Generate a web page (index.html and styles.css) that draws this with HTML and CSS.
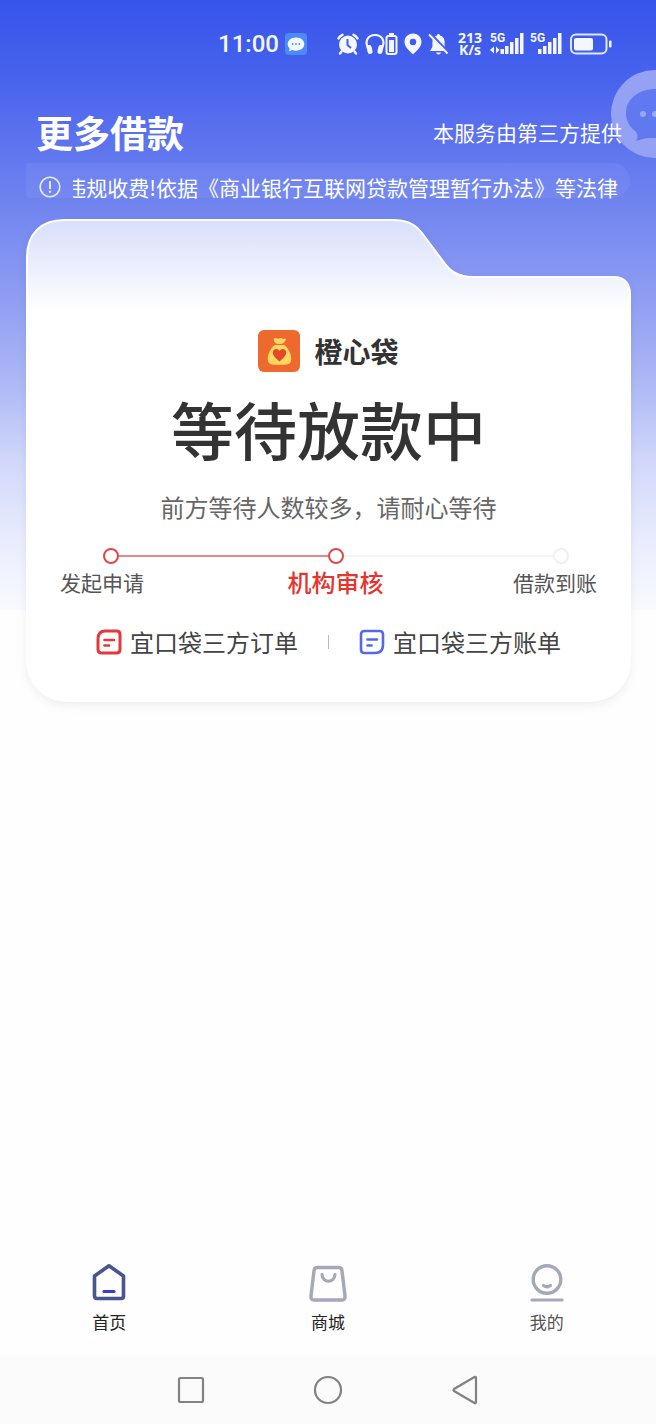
FILE: index.html
```html
<!DOCTYPE html>
<html lang="zh-CN">
<head>
<meta charset="utf-8">
<meta name="viewport" content="width=device-width, initial-scale=1">
<title>更多借款</title>
<link rel="stylesheet" href="styles.css">
</head>
<body>
<div class="app">
  <div class="status">
    <span class="clock">11:00</span>
    <svg class="status-chat" width="22" height="22" viewBox="0 0 22 22" aria-hidden="true"><rect width="22" height="22" rx="4" fill="#4c8af5"/><path d="M11 4.500c5 0 8.300 2.900 8.300 6.600s-3.300 6.600-8.300 6.600c-1.300 0-2.600-.2-3.700-.7L4 18.200l.7-2.700C3.400 14.300 2.700 12.800 2.700 11.100c0-3.700 3.300-6.600 8.300-6.600z" fill="#f4f8ff"/><g fill="#4c8af5"><circle cx="7.700" cy="11" r=".9"/><circle cx="11" cy="11" r=".9"/><circle cx="14.300" cy="11" r=".9"/></g></svg>
    <svg class="status-alarm" width="22" height="22" viewBox="0 0 22 22" aria-hidden="true"><g fill="none" stroke="#f4f7ff" stroke-width="2.400" stroke-linecap="round"><path d="M1.500 5.500Q2.500 3 5.500 1.800M20.500 5.500Q19.500 3 16.500 1.800M4.500 18.500L3 20.500M17.500 18.500L19 20.500"/></g><circle cx="11" cy="11.500" r="9" fill="#f4f7ff"/><path d="M10.500 6v6l3.500 3" fill="none" stroke="#4560ec" stroke-width="2"/></svg>
    <svg class="status-head" width="20" height="22" viewBox="0 0 20 22" aria-hidden="true"><path d="M3 15C-1 7 4 2 10 2s11 5 7 13" fill="none" stroke="#f4f7ff" stroke-width="2.200"/><rect x="2" y="12" width="5" height="9" rx="2.400" fill="#f4f7ff" transform="rotate(-12 4.500 16)"/><rect x="13" y="12" width="5" height="9" rx="2.400" fill="#f4f7ff" transform="rotate(12 15.500 16)"/></svg>
    <svg width="13" height="22" viewBox="0 0 13 22" aria-hidden="true"><rect x="4" y="0" width="5" height="2" fill="#f4f7ff"/><rect x="1.500" y="3" width="10" height="18" rx="2" fill="none" stroke="#f4f7ff" stroke-width="2"/><rect x="4" y="7" width="5" height="12" fill="#f4f7ff"/></svg>
    <svg class="status-pin" width="18" height="22" viewBox="0 0 18 22" aria-hidden="true"><path fill-rule="evenodd" d="M9 .5c5 0 8.500 3.700 8.500 8.300C17.500 14 12.500 18 9 21.500 5.500 18 .5 14 .5 8.800.5 4.200 4 .5 9 .5zm0 5.300a3.200 3.200 0 1 0 0 6.400 3.200 3.200 0 0 0 0-6.400z" fill="#f4f7ff"/></svg>
    <svg class="status-bell" width="21" height="22" viewBox="0 0 21 22" aria-hidden="true"><path d="M10.500 1c1 0 1.500.6 1.500 1.600 3 .8 4.600 3 4.600 6V14l2.400 4H2l2.400-4V8.600c0-3 1.600-5.200 4.600-6C9 1.600 9.500 1 10.500 1zM8 19.500h5q-.6 2-2.500 2T8 19.500z" fill="#f4f7ff"/><path d="M2.500.5l18 19" stroke="#4560ec" stroke-width="2.500"/><path d="M1 1.500l18.500 19" stroke="#f4f7ff" stroke-width="1.800"/></svg>
    <span class="speed">213<br>K/s</span>
    <svg class="status-signal" width="34" height="24" viewBox="0 0 34 24" aria-hidden="true"><text x="0" y="10" class="net">5G</text><g fill="#f4f7ff"><path d="M0 18l4-3.500v7zM9.500 18L6 14.500v7z"/><rect x="10.500" y="17" width="3.500" height="5"/><rect x="15" y="14" width="3.500" height="8"/><rect x="20" y="10" width="3.500" height="12"/><rect x="25" y="6" width="3.500" height="16"/><rect x="30" y="1" width="3.500" height="21"/></g></svg>
    <svg class="status-signal2" width="32" height="24" viewBox="0 0 32 24" aria-hidden="true"><text x="0" y="10" class="net">5G</text><g fill="#f4f7ff"><rect x="8" y="17" width="3.500" height="5"/><rect x="13" y="14" width="3.500" height="8"/><rect x="18" y="10" width="3.500" height="12"/><rect x="23" y="6" width="3.500" height="16"/><rect x="28" y="1" width="3.500" height="21"/></g></svg>
    <svg class="status-batt" width="42" height="22" viewBox="0 0 42 22" aria-hidden="true"><rect x="1" y="1.500" width="35.500" height="19" rx="5" fill="none" stroke="#dfe6ff" stroke-width="2"/><rect x="4" y="5" width="19" height="12.500" rx="2" fill="#f4f7ff"/><rect x="39" y="7.500" width="2.500" height="7" rx="1" fill="#f4f7ff"/></svg>
  </div>

  <header class="header">
    <h1 class="title">更多借款</h1>
    <p class="provider">本服务由第三方提供</p>
  </header>

  <div class="notice">
    <svg width="22" height="22" viewBox="0 0 22 22" aria-hidden="true"><circle cx="11" cy="11" r="9.800" fill="none" stroke="#e6eafe" stroke-width="1.600"/><path d="M11 5v8" stroke="#e6eafe" stroke-width="2"/><circle cx="11" cy="15.700" r="1.200" fill="#e6eafe"/></svg>
    <div class="marquee"><span class="marquee-text">违规收费!依据《商业银行互联网贷款管理暂行办法》等法律</span></div>
  </div>

  <main class="card">
    <svg class="card-shape" viewBox="0 0 604 483" preserveAspectRatio="none" aria-hidden="true">
      <defs><linearGradient id="sheet" x1="0" y1="0" x2="0" y2="1"><stop offset="0" stop-color="#d9dffb"/><stop offset=".1" stop-color="#eceffd"/><stop offset=".19" stop-color="#fff"/></linearGradient></defs>
      <path d="M1 38C1 15 15 1 38 1H366C379 1 388 4 396 15L417 43C424 53 432 58 446 58H587C597 58 603 64 603 75V440C603 465 586 482 561 482H43C18 482 1 465 1 440Z" fill="url(#sheet)" stroke="#fff" stroke-width="2"/>
    </svg>
    <div class="brand">
      <svg width="42" height="42" viewBox="0 0 42 42" aria-hidden="true"><rect width="42" height="42" rx="6" fill="#ee692d"/><path d="M15.500 8.500Q18 7.500 20 9q3-2 5 0 1.600-.8 3-.3-.8 4-4.500 5.300h-4.500Q16 12.500 15.500 8.500z" fill="#fcd569"/><path d="M16.500 15h10c4 3.500 6.700 9 6.700 14 0 4-2.500 5.700-6 5.700H15.700c-3.500 0-6-1.700-6-5.700 0-5 2.800-10.500 6.800-14z" fill="#fcd85f"/><path d="M21.500 31.500C17.500 28 14.800 25.800 14.800 22.600c0-4 5-5 6.700-1.500 1.700-3.500 6.700-2.500 6.700 1.500 0 3.200-2.700 5.400-6.700 8.900z" fill="#e4482b"/></svg>
      <span class="brand-name">橙心袋</span>
    </div>
    <h2 class="state">等待放款中</h2>
    <p class="hint">前方等待人数较多，请耐心等待</p>
    <div class="track" aria-hidden="true">
      <span class="dot on"></span><span class="bar on"></span><span class="dot on"></span><span class="bar"></span><span class="dot"></span>
    </div>
    <ol class="steps">
      <li class="step">发起申请</li>
      <li class="step current" aria-current="step">机构审核</li>
      <li class="step">借款到账</li>
    </ol>
    <div class="links">
      <a class="link" href="#orders"><svg width="26" height="26" viewBox="0 0 26 26" fill="none" stroke="#e6383b" stroke-linecap="round" aria-hidden="true"><path d="M9 2H20.500Q24 2 24 5.500V20.500Q24 24 20.500 24H5.500Q2 24 2 20.500V10Q2 2 9 2z" stroke-width="3"/><path d="M8.500 11H18M8.500 16.500H13" stroke-width="2.600"/></svg>宜口袋三方订单</a>
      <span class="divider"></span>
      <a class="link" href="#bills"><svg width="26" height="26" viewBox="0 0 26 26" fill="none" stroke="#5767ec" stroke-linecap="round" aria-hidden="true"><path d="M5.500 2H20.500Q24 2 24 5.500V16Q24 24 16 24H5.500Q2 24 2 20.500V5.500Q2 2 5.500 2z" stroke-width="2.600"/><path d="M8.500 10.500H18M8.500 16.500H12.500" stroke-width="2.600"/></svg>宜口袋三方账单</a>
    </div>
  </main>

  <nav class="tabs">
    <a class="tab" href="#home"><svg width="40" height="40" viewBox="0 0 40 40" fill="none" stroke-linecap="round" stroke-linejoin="round" aria-hidden="true"><path d="M20 3.800L34.500 14V34Q34.500 36.500 32 36.500H8Q5.500 36.500 5.500 34V14z" stroke="#48558e" stroke-width="3.600"/><path d="M15 29.500H25" stroke="#343fd0" stroke-width="3.200"/></svg>首页</a>
    <a class="tab" href="#mall"><svg width="40" height="40" viewBox="0 0 40 40" fill="none" stroke="#a5a7bb" stroke-linecap="round" stroke-linejoin="round" aria-hidden="true"><path d="M9.500 5.500H30.500Q33.500 5.500 33.900 8L37 34Q37.300 38 34 38H6Q2.700 38 3 34L6.100 8Q6.500 5.500 9.500 5.500z" stroke-width="3.400"/><path d="M14 12.500C15 21.500 26 21.500 27 12.500" stroke-width="3.200"/></svg>商城</a>
    <a class="tab muted" href="#me"><svg width="40" height="40" viewBox="0 0 40 40" fill="none" stroke="#a5a7bb" stroke-linecap="round" aria-hidden="true"><circle cx="20" cy="17.500" r="13.800" stroke-width="3.400"/><path d="M16.500 23.500Q20 26 23.500 23.500" stroke-width="3.200"/><path d="M5 38H35" stroke-width="3.200"/></svg>我的</a>
  </nav>

  <div class="sysnav">
    <button class="sys" type="button" aria-label="最近任务"><svg width="30" height="30" viewBox="0 0 30 30"><rect x="3" y="3" width="24" height="24" rx="1.500" fill="none" stroke="#828282" stroke-width="2.200"/></svg></button>
    <button class="sys" type="button" aria-label="主屏幕"><svg width="30" height="30" viewBox="0 0 30 30"><circle cx="15" cy="15" r="13" fill="none" stroke="#828282" stroke-width="2.200"/></svg></button>
    <button class="sys" type="button" aria-label="返回"><svg width="30" height="30" viewBox="0 0 30 30"><path d="M26 2.500V27.500Q25.500 28.500 24.500 28L4 16Q3 15 4 14L24.500 2Q25.500 1.500 26 2.500z" fill="none" stroke="#828282" stroke-width="2.200" stroke-linejoin="round"/></svg></button>
  </div>

  <button class="bubble" type="button" aria-label="消息"><svg width="88" height="88" viewBox="0 0 88 88" aria-hidden="true"><circle cx="44" cy="44" r="44" fill="#95a2f4"/><path d="M44 19C60 19 73 29 73 43S60 68 44 68C39 68 36 67 25 71Q28 66 25 62C19 57 15 51 15 43 15 29 28 19 44 19z" fill="#6079f0"/><g fill="#98a8f7"><circle cx="32" cy="44" r="3"/><circle cx="44" cy="44" r="3"/><circle cx="56" cy="44" r="3"/></g></svg></button>
</div>
</body>
</html>
```

FILE: styles.css
```css
* { box-sizing: border-box; }

body {
  margin: 0;
  background: #fefefe;
  color: #333;
  font-family: "Noto Sans CJK SC", "Noto Sans", sans-serif;
}

h1, h2, p, ol { margin: 0; padding: 0; }
a { color: inherit; text-decoration: none; }
svg { display: block; flex: none; }
button { padding: 0; border: 0; background: none; cursor: pointer; }

.app {
  position: relative;
  display: flex;
  flex-direction: column;
  min-height: 100vh;
  overflow: hidden;
  background: linear-gradient(#3654ea 0, #4561ed 70px, #566dee 120px, #6f83ef 200px, #8c9bf2 290px, #acb7f5 380px, #d0d7fa 460px, #e9ecfd 540px, #f9faff 610px, #fefefe 610px);
}

.status {
  display: flex;
  align-items: center;
  justify-content: flex-end;
  height: 88px;
  padding-right: 44px;
  color: #f4f7ff;
}
.clock { font: 500 24px/24px Roboto, sans-serif; }
.status-chat { margin-left: 6px; }
.status-alarm { margin-left: 30px; }
.status-head { margin-left: 6px; }
.status-pin { margin-left: 6px; }
.status-bell { margin-left: 6px; }
.speed {
  margin-left: 9px;
  font: 700 14px/12px "Noto Sans", sans-serif;
  text-align: center;
}
.status-signal { margin-left: 8px; }
.status-signal2 { margin-left: 6px; }
.status-batt { margin-left: 8px; }
.net { font: 700 12px Roboto, sans-serif; fill: #f4f7ff; }

.header {
  position: relative;
  z-index: 2;
  display: flex;
  align-items: center;
  justify-content: space-between;
  padding: 18px 34px 0 36px;
  color: #fff;
  pointer-events: none;
}
.title { font-size: 37px; line-height: 52px; font-weight: 700; }
.provider { font-size: 21px; line-height: 52px; }

.notice {
  display: flex;
  align-items: center;
  gap: 12px;
  height: 35px;
  margin: 5px 26px 0;
  padding: 12px 12px 0 13px;
  border-radius: 4px 18px 18px 4px;
  background: rgba(150, 165, 248, .18);
  color: #fff;
}
.marquee {
  display: flex;
  flex: 1;
  justify-content: flex-end;
  overflow: hidden;
}
.marquee-text { font-size: 21px; line-height: 26px; white-space: nowrap; }

.card {
  position: relative;
  margin: 21px 25px 0 26px;
  padding: 111px 34px 42px;
}
.card-shape {
  position: absolute;
  inset: 0;
  width: 100%;
  height: 100%;
  overflow: visible;
  filter: drop-shadow(0 4px 4px rgba(0, 0, 0, .06));
}
.brand, .state, .hint, .track, .steps, .links { position: relative; }

.brand {
  display: flex;
  align-items: center;
  justify-content: center;
  gap: 14px;
}
.brand-name { font-size: 28px; line-height: 42px; font-weight: 700; }
.state {
  margin-top: 11px;
  font-size: 63px;
  line-height: 90px;
  font-weight: 500;
  text-align: center;
}
.hint {
  margin-top: 16px;
  color: #666;
  font-size: 24px;
  line-height: 36px;
  text-align: center;
}

.track {
  display: flex;
  align-items: center;
  margin-top: 23px;
  padding: 0 28px 0 43px;
}
.dot {
  width: 16px;
  height: 16px;
  border: 2px solid #f0f0f0;
  border-radius: 50%;
}
.dot.on { border-color: #dc4a4a; }
.bar { flex: 1; height: 2px; background: #f4f4f4; }
.bar.on { background: #e48a87; }

.steps {
  display: flex;
  justify-content: space-between;
  list-style: none;
}
.step { color: #555; font-size: 21px; line-height: 36px; }
.step.current {
  padding-left: 14px;
  color: #e5352f;
  font-size: 24px;
  font-weight: 500;
}

.links {
  display: flex;
  align-items: center;
  justify-content: center;
  gap: 30px;
  margin-top: 24px;
}
.link {
  display: flex;
  align-items: center;
  gap: 8px;
  color: #444;
  font-size: 24px;
  line-height: 36px;
  white-space: nowrap;
}
.divider { width: 1px; height: 14px; background: #bbb; }

.tabs {
  display: grid;
  grid-template-columns: repeat(3, 1fr);
  margin-top: auto;
  padding: 24px 0 22px;
}
.tab {
  display: flex;
  flex-direction: column;
  align-items: center;
  gap: 8px;
  color: #222;
  font-size: 17px;
  line-height: 24px;
}
.tab.muted { color: #555; }

.sysnav {
  display: flex;
  align-items: center;
  justify-content: center;
  gap: 107px;
  height: 68px;
  background: #fbfbfb;
}

.bubble {
  position: absolute;
  top: 70px;
  right: -43px;
  z-index: 1;
}
```
